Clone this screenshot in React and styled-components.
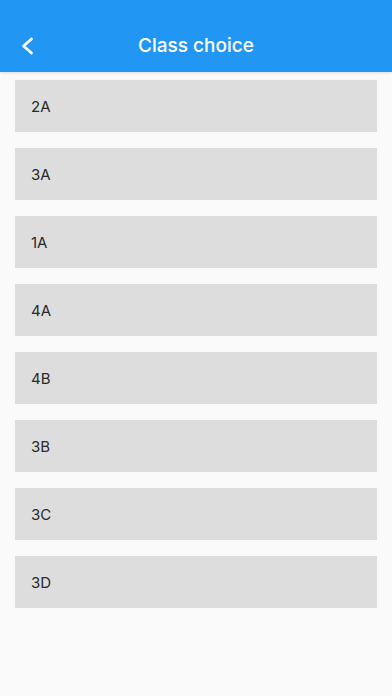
import styled, { createGlobalStyle } from 'styled-components';

const GlobalStyle = createGlobalStyle`
  html, body {
    margin: 0;
    padding: 0;
    background: #fafafa;
  }
  body {
    font-family: Inter, 'Noto Sans', sans-serif;
  }
`;

const classes = ['2A', '3A', '1A', '4A', '4B', '3B', '3C', '3D'];

export default function App() {
  return (
    <Page>
      <GlobalStyle />
      <Header>
        <BackButton aria-label='Back'>
          <svg width='14' height='18' viewBox='0 0 14 18' fill='none'>
            <path
              d='M11.5 2 L3.5 9 L11.5 16'
              stroke='#fff'
              strokeWidth='2.8'
              strokeLinecap='round'
              strokeLinejoin='round'
            />
          </svg>
        </BackButton>
        <Title>Class choice</Title>
      </Header>
      <List>
        {classes.map((name) => (
          <Item key={name}>{name}</Item>
        ))}
      </List>
    </Page>
  );
}

const Page = styled.div`
  width: 392px;
  min-height: 696px;
  background: #fafafa;
`;

const Header = styled.header`
  height: 72px;
  background: #2196f3;
  box-shadow: 0 1px 3px rgba(0, 0, 0, 0.12);
  display: grid;
  grid-template-columns: 56px 1fr 56px;
  align-items: end;
  padding-bottom: 15px;
  box-sizing: border-box;
  position: relative;
  z-index: 1;
`;

const BackButton = styled.button`
  border: none;
  background: none;
  padding: 0 0 0 20px;
  height: 22px;
  display: flex;
  align-items: center;
  cursor: pointer;
`;

const Title = styled.h1`
  margin: 0;
  text-align: center;
  color: #fff;
  font-size: 19px;
  font-weight: 500;
  line-height: 22px;
`;

const List = styled.div`
  display: flex;
  flex-direction: column;
  gap: 16px;
  padding: 8px 15px;
`;

const Item = styled.div`
  height: 52px;
  background: #dddddd;
  display: flex;
  align-items: center;
  padding-left: 16px;
  font-size: 15px;
  font-weight: 400;
  color: #2a2a2a;
  box-shadow: 0 0 1px rgba(0, 0, 0, 0.06);
`;
